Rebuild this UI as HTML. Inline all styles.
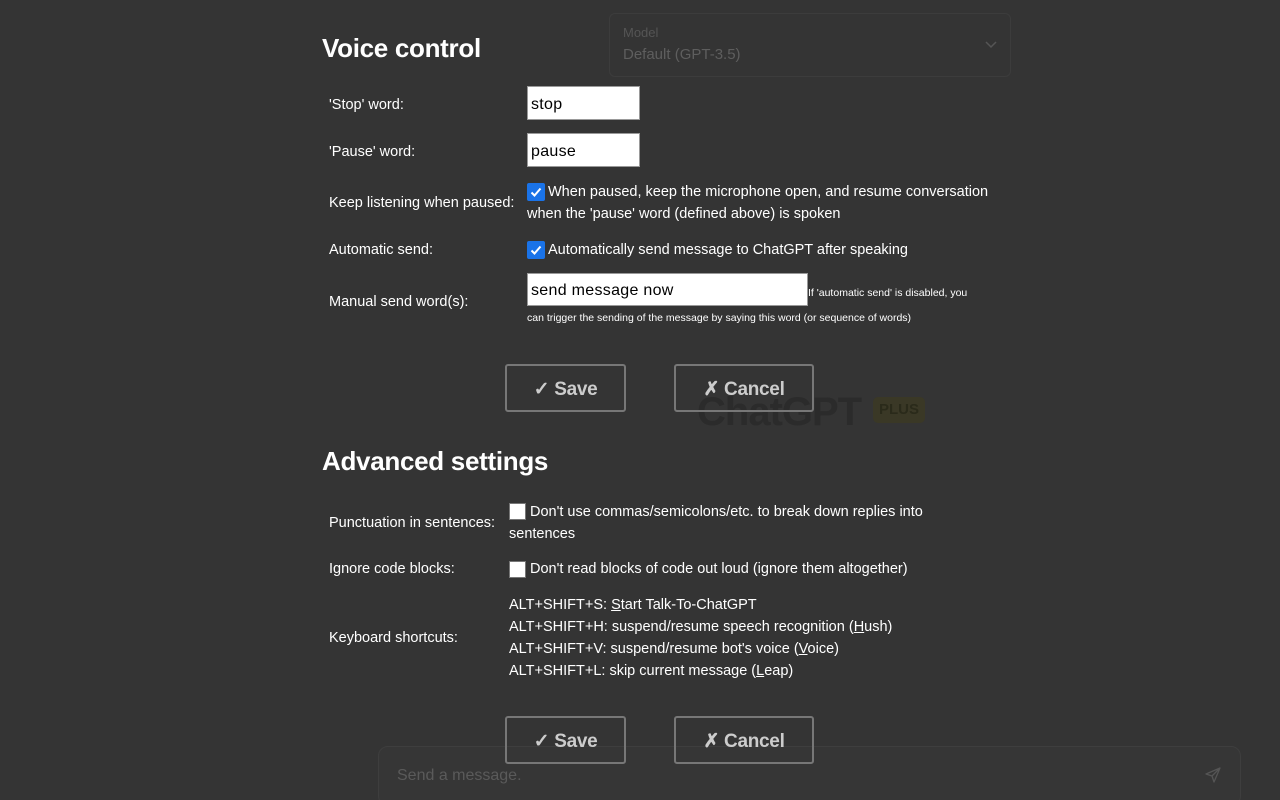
<!DOCTYPE html>
<html><head><meta charset="utf-8"><style>
html,body{margin:0;padding:0;width:1280px;height:800px;overflow:hidden;background:#343434;font-family:"Liberation Sans",sans-serif;color:#fff;position:relative;}
.a{position:absolute;white-space:nowrap;}
.h{font-size:26px;font-weight:bold;letter-spacing:-0.3px;}
.l{font-size:14.5px;letter-spacing:0px;line-height:22px;}
.inp{position:absolute;background:#fff;border:1px solid #999;box-sizing:border-box;color:#000;font-size:16px;padding:9px 3px 0;letter-spacing:0.3px;}
.cb{position:absolute;width:18px;height:18px;background:#1a73e8;border-radius:2px;}
.cb svg{position:absolute;left:3px;top:3px}
.ucb{position:absolute;width:17px;height:17px;background:#fff;border:1px solid #777;box-sizing:border-box;}
.btn{position:absolute;border:2px solid #777;border-radius:3px;box-sizing:border-box;color:#ccc;font-weight:bold;font-size:19px;text-align:center;letter-spacing:-0.3px;}
</style></head><body>
<div class="a" style="left:609px;top:13px;width:402px;height:64px;border:1px solid #3c3c3c;border-radius:6px;box-sizing:border-box;"></div>
<div class="a" style="left:623px;top:25px;font-size:13px;color:#555;">Model</div>
<div class="a" style="left:623px;top:46px;font-size:15px;color:#5e5e5e;">Default (GPT-3.5)</div>
<svg class="a" style="left:985px;top:40px" width="12" height="10"><path d="M1 2 L6 7 L11 2" stroke="#555" stroke-width="1.5" fill="none"/></svg>
<div class="a" style="left:697px;top:390px;font-size:40px;font-weight:bold;color:#2b2b2b;letter-spacing:-1px;">ChatGPT</div>
<div class="a" style="left:873px;top:397px;width:52px;height:26px;background:#3a3826;border-radius:5px;color:#2a2a1a;font-weight:bold;font-size:15px;text-align:center;line-height:26px;">PLUS</div>
<div class="a" style="left:378px;top:746px;width:863px;height:60px;background:#363636;border:1px solid #3e3e3e;border-radius:10px;box-sizing:border-box;"></div>
<div class="a" style="left:397px;top:767px;font-size:16px;color:#5a5a5a;">Send a message.</div>
<svg class="a" style="left:1204px;top:766px" width="18" height="18" viewBox="0 0 18 18"><path d="M2 8 L16 2 L10 16 L8 10 Z M8 10 L16 2" stroke="#555" stroke-width="1.3" fill="none" stroke-linejoin="round"/></svg>

<div class="a h" style="left:322px;top:33px;">Voice control</div>
<div class="a l" style="left:329px;top:94px;">'Stop' word:</div>
<div class="inp" style="left:527px;top:86px;width:113px;height:34px;">stop</div>
<div class="a l" style="left:329px;top:141px;">'Pause' word:</div>
<div class="inp" style="left:527px;top:133px;width:113px;height:34px;">pause</div>
<div class="a l" style="left:329px;top:192px;">Keep listening when paused:</div>
<div class="cb" style="left:527px;top:183px;"><svg width="12" height="12"><path d="M1.5 6.5 L4.5 9.5 L10.5 2.5" stroke="#fff" stroke-width="2" fill="none"/></svg></div>
<div class="a l" style="left:548px;top:181px;">When paused, keep the microphone open, and resume conversation</div>
<div class="a l" style="left:527px;top:203px;">when the 'pause' word (defined above) is spoken</div>
<div class="a l" style="left:329px;top:239px;">Automatic send:</div>
<div class="cb" style="left:527px;top:241px;"><svg width="12" height="12"><path d="M1.5 6.5 L4.5 9.5 L10.5 2.5" stroke="#fff" stroke-width="2" fill="none"/></svg></div>
<div class="a l" style="left:548px;top:239px;">Automatically send message to ChatGPT after speaking</div>
<div class="a l" style="left:329px;top:291px;">Manual send word(s):</div>
<div class="inp" style="left:527px;top:273px;width:281px;height:33px;padding-top:8px;">send message now</div>
<div class="a" style="left:808px;top:287px;font-size:10.5px;">If 'automatic send' is disabled, you</div>
<div class="a" style="left:527px;top:312px;font-size:10.5px;">can trigger the sending of the message by saying this word (or sequence of words)</div>

<div class="btn" style="left:505px;top:364px;width:121px;height:48px;line-height:47px;">✓ Save</div>
<div class="btn" style="left:674px;top:364px;width:140px;height:48px;line-height:47px;">✗ Cancel</div>

<div class="a h" style="left:322px;top:446px;">Advanced settings</div>
<div class="a l" style="left:329px;top:512px;">Punctuation in sentences:</div>
<div class="ucb" style="left:509px;top:503px;"></div>
<div class="a l" style="left:530px;top:501px;">Don't use commas/semicolons/etc. to break down replies into</div>
<div class="a l" style="left:509px;top:523px;">sentences</div>
<div class="a l" style="left:329px;top:558px;">Ignore code blocks:</div>
<div class="ucb" style="left:509px;top:561px;"></div>
<div class="a l" style="left:530px;top:558px;">Don't read blocks of code out loud (ignore them altogether)</div>
<div class="a l" style="left:329px;top:627px;">Keyboard shortcuts:</div>
<div class="a l" style="left:509px;top:594px;">ALT+SHIFT+S: <u>S</u>tart Talk-To-ChatGPT</div>
<div class="a l" style="left:509px;top:616px;">ALT+SHIFT+H: suspend/resume speech recognition (<u>H</u>ush)</div>
<div class="a l" style="left:509px;top:638px;">ALT+SHIFT+V: suspend/resume bot's voice (<u>V</u>oice)</div>
<div class="a l" style="left:509px;top:660px;">ALT+SHIFT+L: skip current message (<u>L</u>eap)</div>

<div class="btn" style="left:505px;top:716px;width:121px;height:48px;line-height:47px;">✓ Save</div>
<div class="btn" style="left:674px;top:716px;width:140px;height:48px;line-height:47px;">✗ Cancel</div>
</body></html>
